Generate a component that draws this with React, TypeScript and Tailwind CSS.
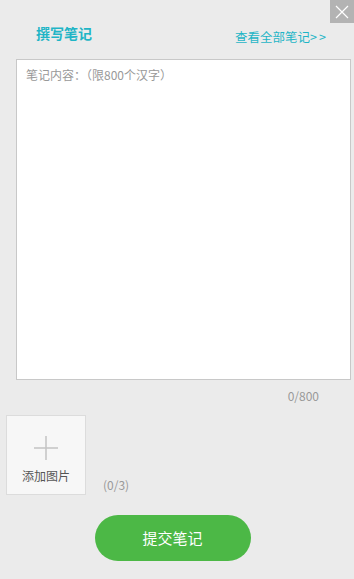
import React, { useState } from 'react';

const font = { fontFamily: '"Noto Sans CJK SC", "Noto Sans", sans-serif' };

export default function App() {
  const [text, setText] = useState('');

  return (
    <div className="relative w-[354px] h-[579px] bg-[#ebebeb] overflow-hidden" style={font}>
      {/* close button */}
      <button className="absolute right-0 top-0 w-[24px] h-[23px] bg-[#b3b3b3] flex items-center justify-center">
        <svg width="14" height="14" viewBox="0 0 14 14">
          <path d="M1 1L13 13M13 1L1 13" stroke="#fff" strokeWidth="1.2" />
        </svg>
      </button>

      <div className="flex items-start justify-between pl-[36px] pr-[26px] h-[59px]">
        <span className="mt-[24px] text-[14px] font-bold text-[#1fb5c6] leading-[18px]">撰写笔记</span>
        <a className="mt-[29px] text-[12.5px] text-[#1fb5c6] leading-[16px] cursor-pointer">
          查看全部笔记<span className="tracking-[2px]">&gt;&gt;</span>
        </a>
      </div>

      <div className="ml-[16px] mr-[3px] h-[321px] bg-white border border-[#c8c8c8]">
        <textarea
          className="w-full h-full resize-none outline-none px-[9px] py-[6px] text-[12px] leading-[18px] text-[#333] placeholder:text-[#999]"
          placeholder="笔记内容：（限800个汉字）"
          maxLength={800}
          value={text}
          onChange={(e) => setText(e.target.value)}
        />
      </div>

      <div className="flex justify-end pr-[35px] mt-[8px] text-[12px] leading-[16px] text-[#999]">
        {text.length}/800
      </div>

      <div className="flex items-end ml-[6px] mt-[11px]">
        <div className="w-[80px] h-[80px] bg-[#f7f7f7] border border-[#dcdcdc] flex flex-col items-center cursor-pointer">
          <svg className="mt-[20px]" width="24" height="24" viewBox="0 0 24 24">
            <path d="M12 0V24M0 12H24" stroke="#c4c4c4" strokeWidth="1.5" />
          </svg>
          <span className="mt-[8px] text-[12px] leading-[16px] text-[#555]">添加图片</span>
        </div>
        <span className="ml-[17px] mb-[2px] text-[12px] leading-[16px] text-[#999]">(0/3)</span>
      </div>

      <div className="flex justify-center mt-[20px] pr-[9px]">
        <button className="w-[156px] h-[46px] rounded-full bg-[#4cb846] text-white text-[15px]">
          提交笔记
        </button>
      </div>
    </div>
  );
}
